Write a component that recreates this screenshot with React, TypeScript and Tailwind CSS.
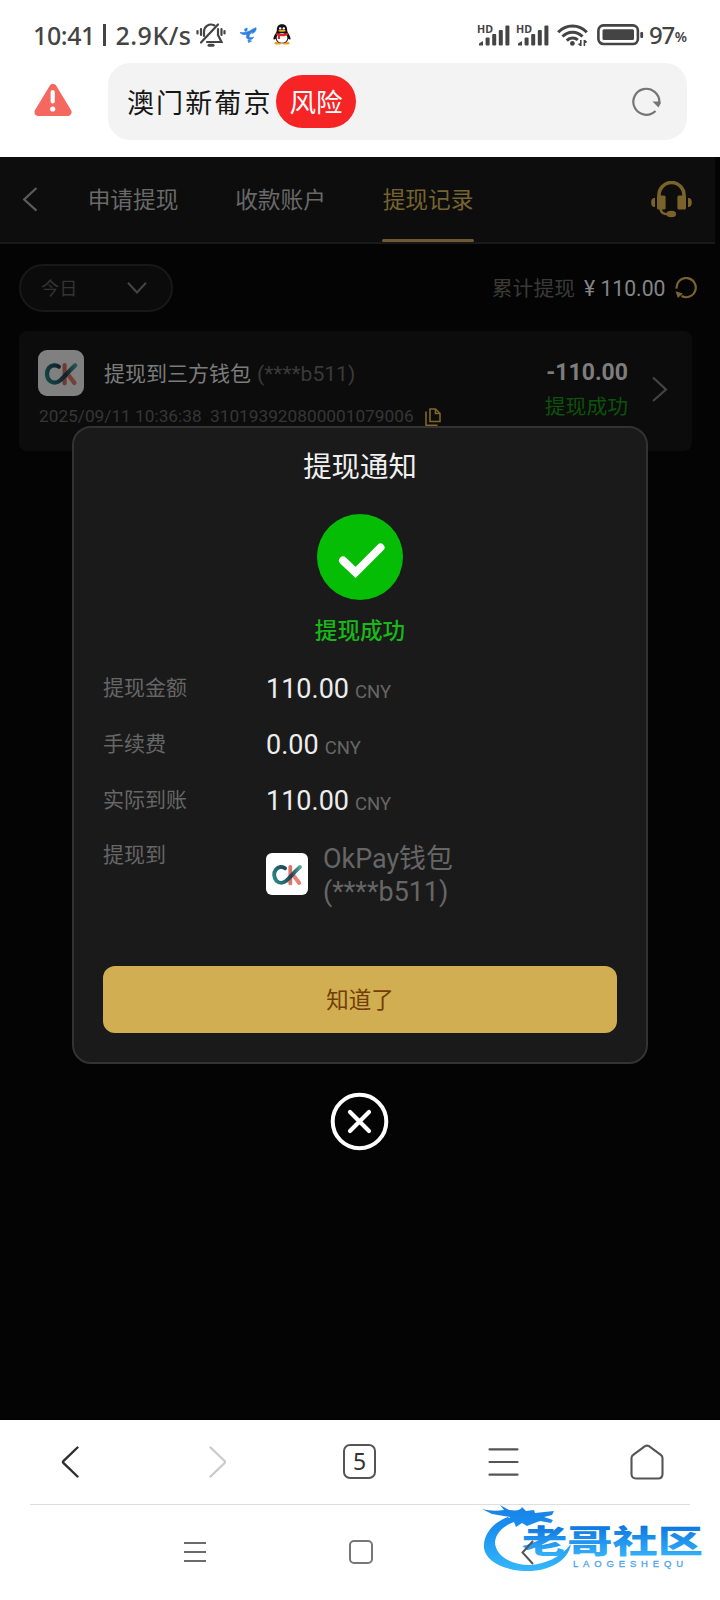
import React from 'react';

const tabs = [
  { label: '申请提现', active: false },
  { label: '收款账户', active: false },
  { label: '提现记录', active: true },
];

const amounts = [
  { label: '提现金额', value: '110.00' },
  { label: '手续费', value: '0.00' },
  { label: '实际到账', value: '110.00' },
];

const WalletLogo: React.FC<{ className: string; id: string }> = ({ className, id }) => (
  <svg className={className} viewBox="0 0 42 42" fill="none">
    <defs>
      <linearGradient id={id} x1="8" y1="28" x2="36" y2="12" gradientUnits="userSpaceOnUse">
        <stop offset="0" stopColor="#2a8a86" />
        <stop offset="0.55" stopColor="#1f3f56" />
        <stop offset="1" stopColor="#5cc0a8" />
      </linearGradient>
    </defs>
    <path d="M24.3 13.8V30.4" stroke="#dd7468" strokeWidth="3.8" strokeLinecap="round" />
    <path d="M27.6 22.6L33.2 30" stroke="#ea8072" strokeWidth="4" strokeLinecap="round" />
    <path d="M19 15.2C16.4 13.2 12.4 13.6 10 16.4C7.4 19.6 7.6 24.8 10.5 27.8C13.2 30.4 17.2 30.2 20 28C23 25.6 28 19.2 34 14" stroke={`url(#${id})`} strokeWidth="3.9" strokeLinecap="round" />
  </svg>
);

const Signal: React.FC = () => (
  <svg className="h-6 w-[34px]" viewBox="0 0 34 24" fill="#444">
    <text x="0" y="9.5" fontSize="10.5" fontWeight="700" fontFamily="Noto Sans, sans-serif" textLength="16" lengthAdjust="spacingAndGlyphs">HD</text>
    <path d="M2 22.5V20.5L6 18V22.5Z" />
    <rect x="8.6" y="14.5" width="4" height="8" rx="1" />
    <rect x="15.2" y="11" width="4" height="11.5" rx="1" />
    <rect x="21.8" y="7" width="4" height="15.5" rx="1" />
    <rect x="28.4" y="2.5" width="4" height="20" rx="1" />
  </svg>
);

const StatusBar: React.FC = () => (
  <div className="flex h-[63px] items-center justify-between pt-[6px] pl-[33px] pr-[33px] text-[#444]">
    <div className="flex items-center">
      <div className="flex w-[160px] items-center whitespace-nowrap font-['Noto_Sans',sans-serif] text-[25px] font-medium leading-[30px]">
        <span className="w-[66px] tracking-[-0.4px]">10:41</span>
        <span className="h-[22px] w-[2.5px] translate-x-[4px] bg-[#444]" />
        <span className="ml-[14px] tracking-[0.5px]">2.9K/s</span>
      </div>
      <svg className="ml-[3px] h-[26px] w-[30px]" viewBox="0 0 30 26" fill="none" stroke="#444" strokeWidth="2.2" strokeLinecap="round">
        <path d="M22 2.5L5 20.5" />
        <path d="M18.5 3.4C13 0.8 8 4.5 8 10V14" />
        <path d="M22 7V13L25.5 20H11" />
        <path d="M13 23.3H17" strokeWidth="3" />
        <path d="M5 7V13M1.5 9V11.5M25.5 7V13M28.5 9V11.5" />
      </svg>
      <svg className="ml-[14px] h-[16px] w-[17px]" viewBox="0 0 17 16" fill="#2d7fe0" stroke="#2d7fe0" strokeWidth=".7">
        <path d="M0 5.5C4 6.2 9 5 12.5 2.2L16 .8C16.6 3.5 14.5 5.8 11.8 6.6L13 4.4C10.5 6 8.8 7.6 9.2 9.8C9.8 11.2 12 11 13.5 10C12.6 13.6 6.4 13.4 6.4 9.6C6.4 8.8 6.8 7.8 7.4 7C5 8 2 7.8 0 5.5Z" />
        <path d="M4.5 2.2L7.2 1L6.8 4L5 4.3ZM8 13L11.5 14L8.5 15.6Z" />
      </svg>
      <svg className="ml-[16px] h-[21px] w-[18px]" viewBox="0 0 18 21">
        <ellipse cx="5" cy="19" rx="3.6" ry="1.6" fill="#f59a1b" />
        <ellipse cx="13" cy="19" rx="3.6" ry="1.6" fill="#f59a1b" />
        <path d="M9 .3C5 .3 3.8 3 3.8 6.5C3.5 8.8.4 12 .4 15C1 16 2 15.3 2.6 14.7C3.2 17.6 6 19.3 9 19.3S14.8 17.6 15.4 14.7C16 15.3 17 16 17.6 15C17.6 12 14.5 8.8 14.2 6.5C14.2 3 13 .3 9 .3Z" fill="#111" />
        <ellipse cx="9" cy="14" rx="5.4" ry="4.8" fill="#fff" />
        <circle cx="7.2" cy="4.4" r="1.2" fill="#fff" />
        <circle cx="10.8" cy="4.4" r="1.2" fill="#fff" />
        <ellipse cx="9" cy="6.8" rx="3.6" ry="1" fill="#f5a81b" />
        <path d="M3.5 8.7C7 10.5 11 10.5 14.5 8.7L15 11C11.5 12.4 9 12.4 7 12V15H4.8V11.3L3 11Z" fill="#dd2525" />
      </svg>
    </div>
    <div className="flex items-center">
      <Signal />
      <span className="w-[5px]" />
      <Signal />
      <svg className="ml-[7px] h-[24px] w-[31px]" viewBox="0 0 31 24" fill="none" stroke="#444" strokeWidth="3">
        <path d="M1.2 9.2C9 .8 22 .8 29.8 9.2" />
        <path d="M5.5 13.5C11 7.8 20 7.8 25.5 13.5" />
        <path d="M9.8 17.6C13 14.2 18 14.2 20.8 17" />
        <circle cx="15.4" cy="20.4" r="2.4" fill="#444" stroke="none" />
        <path d="M23.8 17V23M27.4 17V23M23.8 22.6L21.6 20.6M27.4 17.4L29.6 19.4" strokeWidth="1.6" />
      </svg>
      <svg className="ml-[9px] h-[22px] w-[47px]" viewBox="0 0 47 22">
        <rect x="1.4" y="1.4" width="39.5" height="18.6" rx="5" fill="none" stroke="#444" strokeWidth="2.6" />
        <rect x="5.5" y="5.3" width="31.5" height="10.8" rx="1.5" fill="#444" />
        <rect x="43.3" y="8" width="2.8" height="6" rx="1" fill="#444" />
      </svg>
      <span className="ml-[5px] font-['Noto_Sans',sans-serif] text-[24px] font-medium leading-[30px] tracking-[-1.4px]">97</span>
      <span className="ml-px pt-[5px] font-['Noto_Sans',sans-serif] text-[14px] font-semibold leading-5">%</span>
    </div>
  </div>
);

const AddressBar: React.FC = () => (
  <div className="flex h-[94px] items-start pl-[34px] pr-[33px]">
    <svg className="mt-[20px] h-[34px] w-[38px]" viewBox="0 0 38 34">
      <path d="M19 5L33.5 29H4.5Z" fill="#f4685f" stroke="#f4685f" strokeWidth="8" strokeLinejoin="round" />
      <path d="M18.7 9V18.5" stroke="#fff" strokeWidth="4.2" strokeLinecap="round" />
      <circle cx="18.7" cy="26" r="2.6" fill="#fff" />
    </svg>
    <div className="ml-[36px] flex h-[77px] flex-1 items-center rounded-[22px] bg-[#f3f3f3] pl-[19px] pr-[26px]">
      <span className="w-[149px] whitespace-nowrap pt-[4px] text-[27px] leading-10 tracking-[2.1px] text-[#161616]">澳门新葡京</span>
      <span className="flex h-[53px] w-[80px] items-center justify-center rounded-full bg-[#f62424] pt-[3px] text-[26.5px] leading-10 text-white">风险</span>
      <svg className="ml-auto h-[29px] w-[29px]" viewBox="0 0 29 29" fill="none">
        <path d="M23.5 24A13 13 0 1 1 27.3 15.5" stroke="#757575" strokeWidth="2.2" />
        <path d="M20.5 14.5H28.6V16.5L26.5 20.5Z" fill="#757575" />
      </svg>
    </div>
  </div>
);

const TabBar: React.FC = () => (
  <div className="flex h-[87px] w-[715px] border-b-2 border-[#191919] bg-[#0d0d0d] pl-[22px]">
    <svg className="mt-[30px] h-[25px] w-[17px]" viewBox="0 0 17 25" fill="none">
      <path d="M14.5 1L2.2 12.5L14.5 23.6" stroke="#5c5c5c" strokeWidth="2.2" />
    </svg>
    <div className="ml-[48px] flex gap-[55.5px] text-[22.7px] leading-[87px]">
      {tabs.map((tab) => (
        <div
          key={tab.label}
          className={
            tab.active
              ? 'flex w-[92px] flex-col text-center text-[#77632f]'
              : 'flex w-[92px] flex-col text-center text-[#696969]'
          }
        >
          <span className="h-[82px] whitespace-nowrap">{tab.label}</span>
          {tab.active && <span className="h-[3px] rounded-full bg-[#6b5a34]" />}
        </div>
      ))}
    </div>
    <svg className="ml-auto mr-[23px] mt-[24px] h-[37px] w-[41px]" viewBox="0 0 41 37" fill="#7a632b">
      <path d="M8 16V14A12.5 12.5 0 0 1 33 14V16" fill="none" stroke="#7a632b" strokeWidth="3.6" />
      <rect x="6" y="14.5" width="8.6" height="14" rx="1.5" />
      <rect x="26.4" y="14.5" width="8.6" height="14" rx="1.5" />
      <path d="M4 17V26C1 26 .2 24 .2 21.5S1 17 4 17ZM37 17V26C40 26 40.8 24 40.8 21.5S40 17 37 17Z" />
      <path d="M9.5 28C10 31.5 12 33.2 17 33.2" fill="none" stroke="#7a632b" strokeWidth="2.4" />
      <ellipse cx="20.3" cy="33" rx="4.8" ry="3.3" />
    </svg>
  </div>
);

const FilterRow: React.FC = () => (
  <div className="mt-[20px] flex h-[48px] items-center justify-between pl-[19px] pr-[23px]">
    <div className="flex h-[48px] w-[154px] items-center justify-between rounded-full border-2 border-[#181818] bg-[#0b0b0b] pl-[20px] pr-[24px] text-[18.2px] leading-7 text-[#343434]">
      <span className="pt-[1px]">今日</span>
      <svg className="h-[13px] w-[20px]" viewBox="0 0 20 13" fill="none">
        <path d="M1 .8L10 10.5L19 .8" stroke="#454545" strokeWidth="2" />
      </svg>
    </div>
    <div className="flex items-center leading-7">
      <span className="pt-[2px] text-[20.8px] text-[#3a3a3a]">累计提现</span>
      <span className="ml-[9px] w-[82px] whitespace-nowrap pt-[2px] font-['Roboto',sans-serif] text-[21.2px] text-[#858585]">¥ 110.00</span>
      <svg className="ml-[9px] h-[22px] w-[22px]" viewBox="0 0 22 22" fill="none">
        <path d="M1.6 11.6A9.6 9.6 0 1 1 6.5 19" stroke="#7a6330" strokeWidth="2.2" />
        <path d="M.6 14.2L8 16.4L2.8 21Z" fill="#7a6330" />
      </svg>
    </div>
  </div>
);

const RecordCard: React.FC = () => (
  <div className="ml-[19px] mt-[19px] flex h-[120px] w-[673px] justify-between rounded-lg bg-[#0c0c0c] pl-[19px] pr-[24px] pt-[19px]">
    <div>
      <div className="flex h-[46px] items-center">
        <div className="flex h-[46px] w-[46px] items-center justify-center rounded-[9px] bg-white brightness-50">
          <WalletLogo id="card-logo" className="h-[46px] w-[46px]" />
        </div>
        <span className="ml-[20px] whitespace-nowrap pt-[2px] text-[21px] leading-[46px] text-[#7c7c7c]">提现到三方钱包</span>
        <span className="ml-[6px] pt-[2px] text-[21.1px] leading-[46px] text-[#3a3a3a]">(****b511)</span>
      </div>
      <div className="mt-[9px] flex h-[22px] items-center whitespace-nowrap text-[17.25px] leading-[22px] text-[#363636]">
        <span className="w-[172px] pl-[1px]">2025/09/11 10:36:38</span>
        <span className="w-[215px]">310193920800001079006</span>
        <svg className="mt-[2px] h-[18px] w-[16px]" viewBox="0 0 16 18" fill="none" stroke="#806528" strokeWidth="1.6">
          <path d="M5 1H10.5L15 5.5V13.5H5Z" />
          <path d="M10.5 1V5.5H15" />
          <path d="M1 3.5V17.2H12.5" />
        </svg>
      </div>
    </div>
    <div className="flex">
      <div className="flex flex-col items-end">
        <span className="mt-[7px] text-[23px] font-bold leading-[32px] text-[#7d7d7d]">-110.00</span>
        <span className="mt-[1px] text-[20.8px] leading-[34px] text-[#0b520b]">提现成功</span>
      </div>
      <svg className="ml-[23px] mt-[26px] h-[27px] w-[17px]" viewBox="0 0 17 27" fill="none">
        <path d="M2 1.5L15 13.5L2 25" stroke="#444" strokeWidth="2.2" />
      </svg>
    </div>
  </div>
);

const NoticeModal: React.FC = () => (
  <div className="absolute inset-x-0 top-[269px] flex flex-col items-center">
    <div className="flex h-[638px] w-[576px] flex-col items-center rounded-[19px] border-2 border-[#333] bg-[#1a1a1a] px-[29px]">
      <h2 className="mt-[20px] text-[28.4px] leading-10 text-[#f0f0f0]">提现通知</h2>
      <svg className="mt-[26px] h-[86px] w-[86px] shrink-0" viewBox="0 0 86 86" fill="none">
        <circle cx="43" cy="43" r="43" fill="#05bd05" />
        <path d="M26 46.5L38.5 58.5L63.5 33.5" stroke="#fff" strokeWidth="8" strokeLinecap="round" />
      </svg>
      <p className="mt-[16px] text-[22.6px] font-medium leading-8 text-[#17b817]">提现成功</p>
      <div className="mt-[13px] w-full">
        {amounts.map((row) => (
          <div key={row.label} className="flex h-14 items-center">
            <span className="w-[163px] pb-[2px] text-[21px] leading-8 text-[#666]">{row.label}</span>
            <span className="flex items-baseline">
              <span className="text-[27px] leading-10 text-[#ededed]">{row.value}</span>
              <span className="ml-[6px] text-[18.5px] text-[#666]">CNY</span>
            </span>
          </div>
        ))}
        <div className="flex pt-[10px]">
          <span className="w-[163px] text-[21px] leading-8 text-[#666]">提现到</span>
          <div className="mt-[14px] flex h-[42px] w-[42px] items-center justify-center rounded-md bg-white">
            <WalletLogo id="modal-logo" className="h-[42px] w-[42px]" />
          </div>
          <p className="ml-[15px] mt-[4px] text-[26.9px] leading-[33px] text-[#666]">
            OkPay钱包
            <br />
            (****b511)
          </p>
        </div>
      </div>
      <button className="mb-[29px] mt-auto h-[67px] w-full shrink-0 rounded-[12px] bg-[#d0ae51] text-[22.5px] leading-8 text-[#723d06]">知道了</button>
    </div>
    <svg className="mr-px mt-[28px] h-[59px] w-[59px]" viewBox="0 0 59 59" fill="none" stroke="#fff">
      <circle cx="29.5" cy="29.5" r="26.8" strokeWidth="4" />
      <path d="M20 20L39 39M39 20L20 39" strokeWidth="4.2" strokeLinecap="round" />
    </svg>
  </div>
);

const BrowserBar: React.FC = () => (
  <>
    <div className="grid h-[84px] grid-cols-5 place-items-center pb-px">
      <svg className="mr-[4px] h-[32px] w-[18px]" viewBox="0 0 18 32" fill="none" stroke="#2e2e2e" strokeWidth="2.4" strokeLinecap="round" strokeLinejoin="round">
        <path d="M16.5 1.5L2.6 14.8Q1.4 16 2.6 17.2L16.5 30.5" />
      </svg>
      <svg className="ml-[4px] h-[32px] w-[18px]" viewBox="0 0 18 32" fill="none" stroke="#c9c9c9" strokeWidth="2.2" strokeLinecap="round" strokeLinejoin="round">
        <path d="M1.5 1.5L15.4 14.8Q16.6 16 15.4 17.2L1.5 30.5" />
      </svg>
      <div className="mr-px flex h-[35px] w-[33px] items-center justify-center rounded-[7px] border-2 border-[#555] font-['Noto_Sans',sans-serif] text-[23px] leading-none text-[#333]">5</div>
      <svg className="mr-[2px] h-[30px] w-[31px]" viewBox="0 0 31 30" stroke="#555" strokeWidth="2.2" strokeLinecap="round">
        <path d="M1.5 2.3H29.5M1.5 15H29.5M1.5 27.7H29.5" />
      </svg>
      <svg className="mr-[2px] h-[36px] w-[34px]" viewBox="0 0 34 36" fill="none" stroke="#555" strokeWidth="2.1" strokeLinejoin="round">
        <path d="M1.5 14Q1.5 12 3.2 10.8L15 2.2Q17 1 19 2.2L30.8 10.8Q32.5 12 32.5 14V30Q32.5 34.5 28 34.5H6Q1.5 34.5 1.5 30Z" />
      </svg>
    </div>
    <div className="mx-[30px] h-px bg-[#dedede]" />
  </>
);

const Watermark: React.FC = () => (
  <svg className="absolute right-[12px] top-[82px] h-[78px] w-[228px]" viewBox="0 0 228 78" fill="none">
    <defs>
      <linearGradient id="wave" x1="0" y1="0" x2="0" y2="72" gradientUnits="userSpaceOnUse">
        <stop offset="0" stopColor="#1b7fe3" />
        <stop offset="0.35" stopColor="#178ff0" />
        <stop offset="1" stopColor="#38bafb" />
      </linearGradient>
      <linearGradient id="mark" x1="0" y1="-31" x2="0" y2="3" gradientUnits="userSpaceOnUse">
        <stop offset="0" stopColor="#0f78e0" />
        <stop offset="1" stopColor="#33b0fa" />
      </linearGradient>
    </defs>
    <path d="M28 15C12 21 3 33 4 46C6 61 28 70 52 69C73 67 88 58 91 42C80 56 65 62 50 63C30 63 15 53 15 40C16 31 23 24 34 20Z" fill="url(#wave)" />
    <path d="M2 7C10 9 17 9 24 8L20 3L29 8C37 9 41 8 42 5L46 9L54 8L55 11L74 9L72 13L64 15L73 18L71 21L60 19L52 22L47 24L42 21L36 25L34 20L27 20L30 15L12 12Z" fill="url(#wave)" />
    <text transform="translate(42 51) scale(1.24 .86)" fontSize="36.5" fontWeight="900" fontFamily="Noto Sans CJK SC, sans-serif" fill="url(#mark)">老哥社区</text>
    <text x="93" y="64.5" fontSize="9.5" fontFamily="Liberation Sans, sans-serif" stroke="#4aa2ee" strokeWidth=".3" fill="#4aa2ee" textLength="110">LAOGESHEQU</text>
  </svg>
);

const SystemNav: React.FC = () => (
  <div className="relative flex h-[95px] items-center pb-px pl-[184px]">
    <svg className="h-[22px] w-[22px]" viewBox="0 0 22 22" stroke="#6b6b6b" strokeWidth="2">
      <path d="M0 2H22M0 11H22M0 20H22" />
    </svg>
    <div className="ml-[143px] h-[24px] w-[24px] rounded-[5px] border-2 border-[#777]" />
    <svg className="ml-[148px] h-[25px] w-[13px]" viewBox="0 0 13 25" fill="none" stroke="#555" strokeWidth="2">
      <path d="M12 1L1.5 12.5L12 24" />
    </svg>
  </div>
);

const App: React.FC = () => {
  return (
    <div className="flex h-[1600px] w-[720px] flex-col overflow-hidden bg-white font-['Roboto','Noto_Sans_CJK_SC',sans-serif]">
      <StatusBar />
      <AddressBar />
      <main className="relative h-[1263px] bg-[#040404]">
        <TabBar />
        <FilterRow />
        <RecordCard />
        <NoticeModal />
      </main>
      <footer className="relative">
        <BrowserBar />
        <Watermark />
        <SystemNav />
      </footer>
    </div>
  );
};

export default App;
